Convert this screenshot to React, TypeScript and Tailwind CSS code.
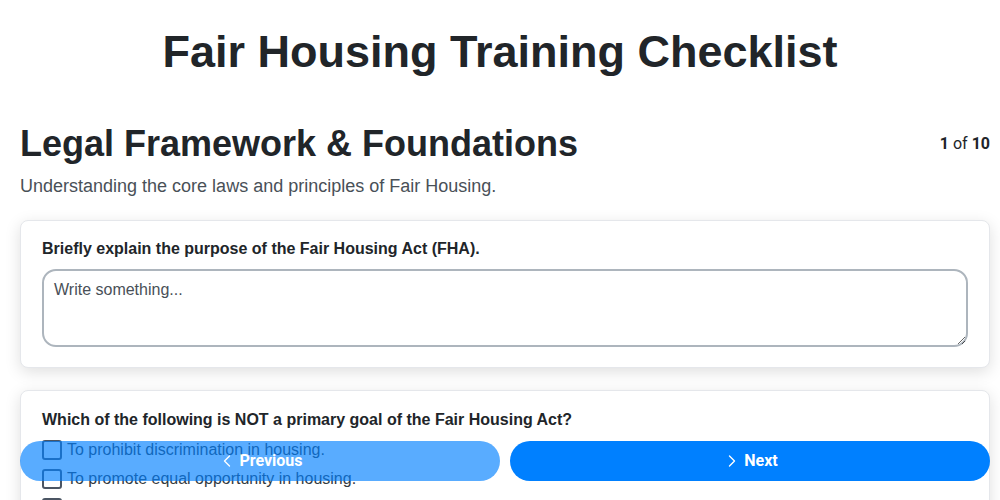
import { ChevronLeft, ChevronRight } from 'lucide-react';

const options = [
    'To prohibit discrimination in housing.',
    'To promote equal opportunity in housing.',
    'To set maximum rent prices in all cities.',
    'To foster inclusive communities.',
];

export default function App() {
    return (
        <div className="min-h-screen bg-white text-[#212529] font-['Liberation_Sans',Arial,sans-serif]">
            <div className="pl-5 pr-2.5 pt-[25px] pb-24">
                <h1 className="pr-2.5 text-center text-[45px] leading-[1.2] font-bold">Fair Housing Training Checklist</h1>

                <div className="mt-[43px] flex items-center justify-between">
                    <h2 className="text-4xl leading-[1.2] font-bold">Legal Framework &amp; Foundations</h2>
                    <div className="text-base font-['Roboto',sans-serif]">
                        <span className="font-bold">1</span> of <span className="font-bold">10</span>
                    </div>
                </div>
                <p className="mt-2 text-lg leading-[1.5] text-[#495057]">
                    Understanding the core laws and principles of Fair Housing.
                </p>

                <div className="mt-5 flex flex-col gap-[22px]">
                    <div className="rounded-lg border border-[#e5e7eb] bg-white px-[21px] pt-4 pb-5 shadow-[0_4px_16px_rgba(0,0,0,0.13)]">
                        <label className="block text-base leading-6 font-bold">
                            Briefly explain the purpose of the Fair Housing Act (FHA).
                        </label>
                        <textarea
                            placeholder="Write something..."
                            className="mt-2 block h-[78px] w-full rounded-[14px] border-2 border-[#adb5bd] px-2.5 py-[7px] text-base leading-6 placeholder:text-[#495057] outline-none"
                        />
                    </div>

                    <div className="rounded-lg border border-[#e5e7eb] bg-white px-[21px] pt-[17px] pb-5 shadow-[0_4px_16px_rgba(0,0,0,0.13)]">
                        <div className="text-base leading-6 font-bold">
                            Which of the following is NOT a primary goal of the Fair Housing Act?
                        </div>
                        <div className="mt-1.5 flex flex-col gap-[5px]">
                            {options.map((opt) => (
                                <label key={opt} className="flex h-6 items-center gap-[5px] text-base text-[#343a40]">
                                    <span className="h-[20px] w-[20px] shrink-0 rounded-[3px] border-2 border-[#4b5563] bg-white" />
                                    <span>{opt}</span>
                                </label>
                            ))}
                        </div>
                    </div>
                </div>
            </div>

            <div className="fixed left-5 right-2.5 bottom-[19px] flex gap-2.5 font-['Roboto',sans-serif]">
                <button className="flex h-10 flex-1 items-center justify-center gap-0.5 rounded-full bg-[#0080ff] text-base font-bold text-white opacity-65">
                    <ChevronLeft className="h-5 w-5" strokeWidth={1.6} />
                    <span>Previous</span>
                </button>
                <button className="flex h-10 flex-1 items-center justify-center gap-0.5 rounded-full bg-[#0080ff] text-base font-bold text-white">
                    <ChevronRight className="h-5 w-5" strokeWidth={1.6} />
                    <span>Next</span>
                </button>
            </div>
        </div>
    );
}
